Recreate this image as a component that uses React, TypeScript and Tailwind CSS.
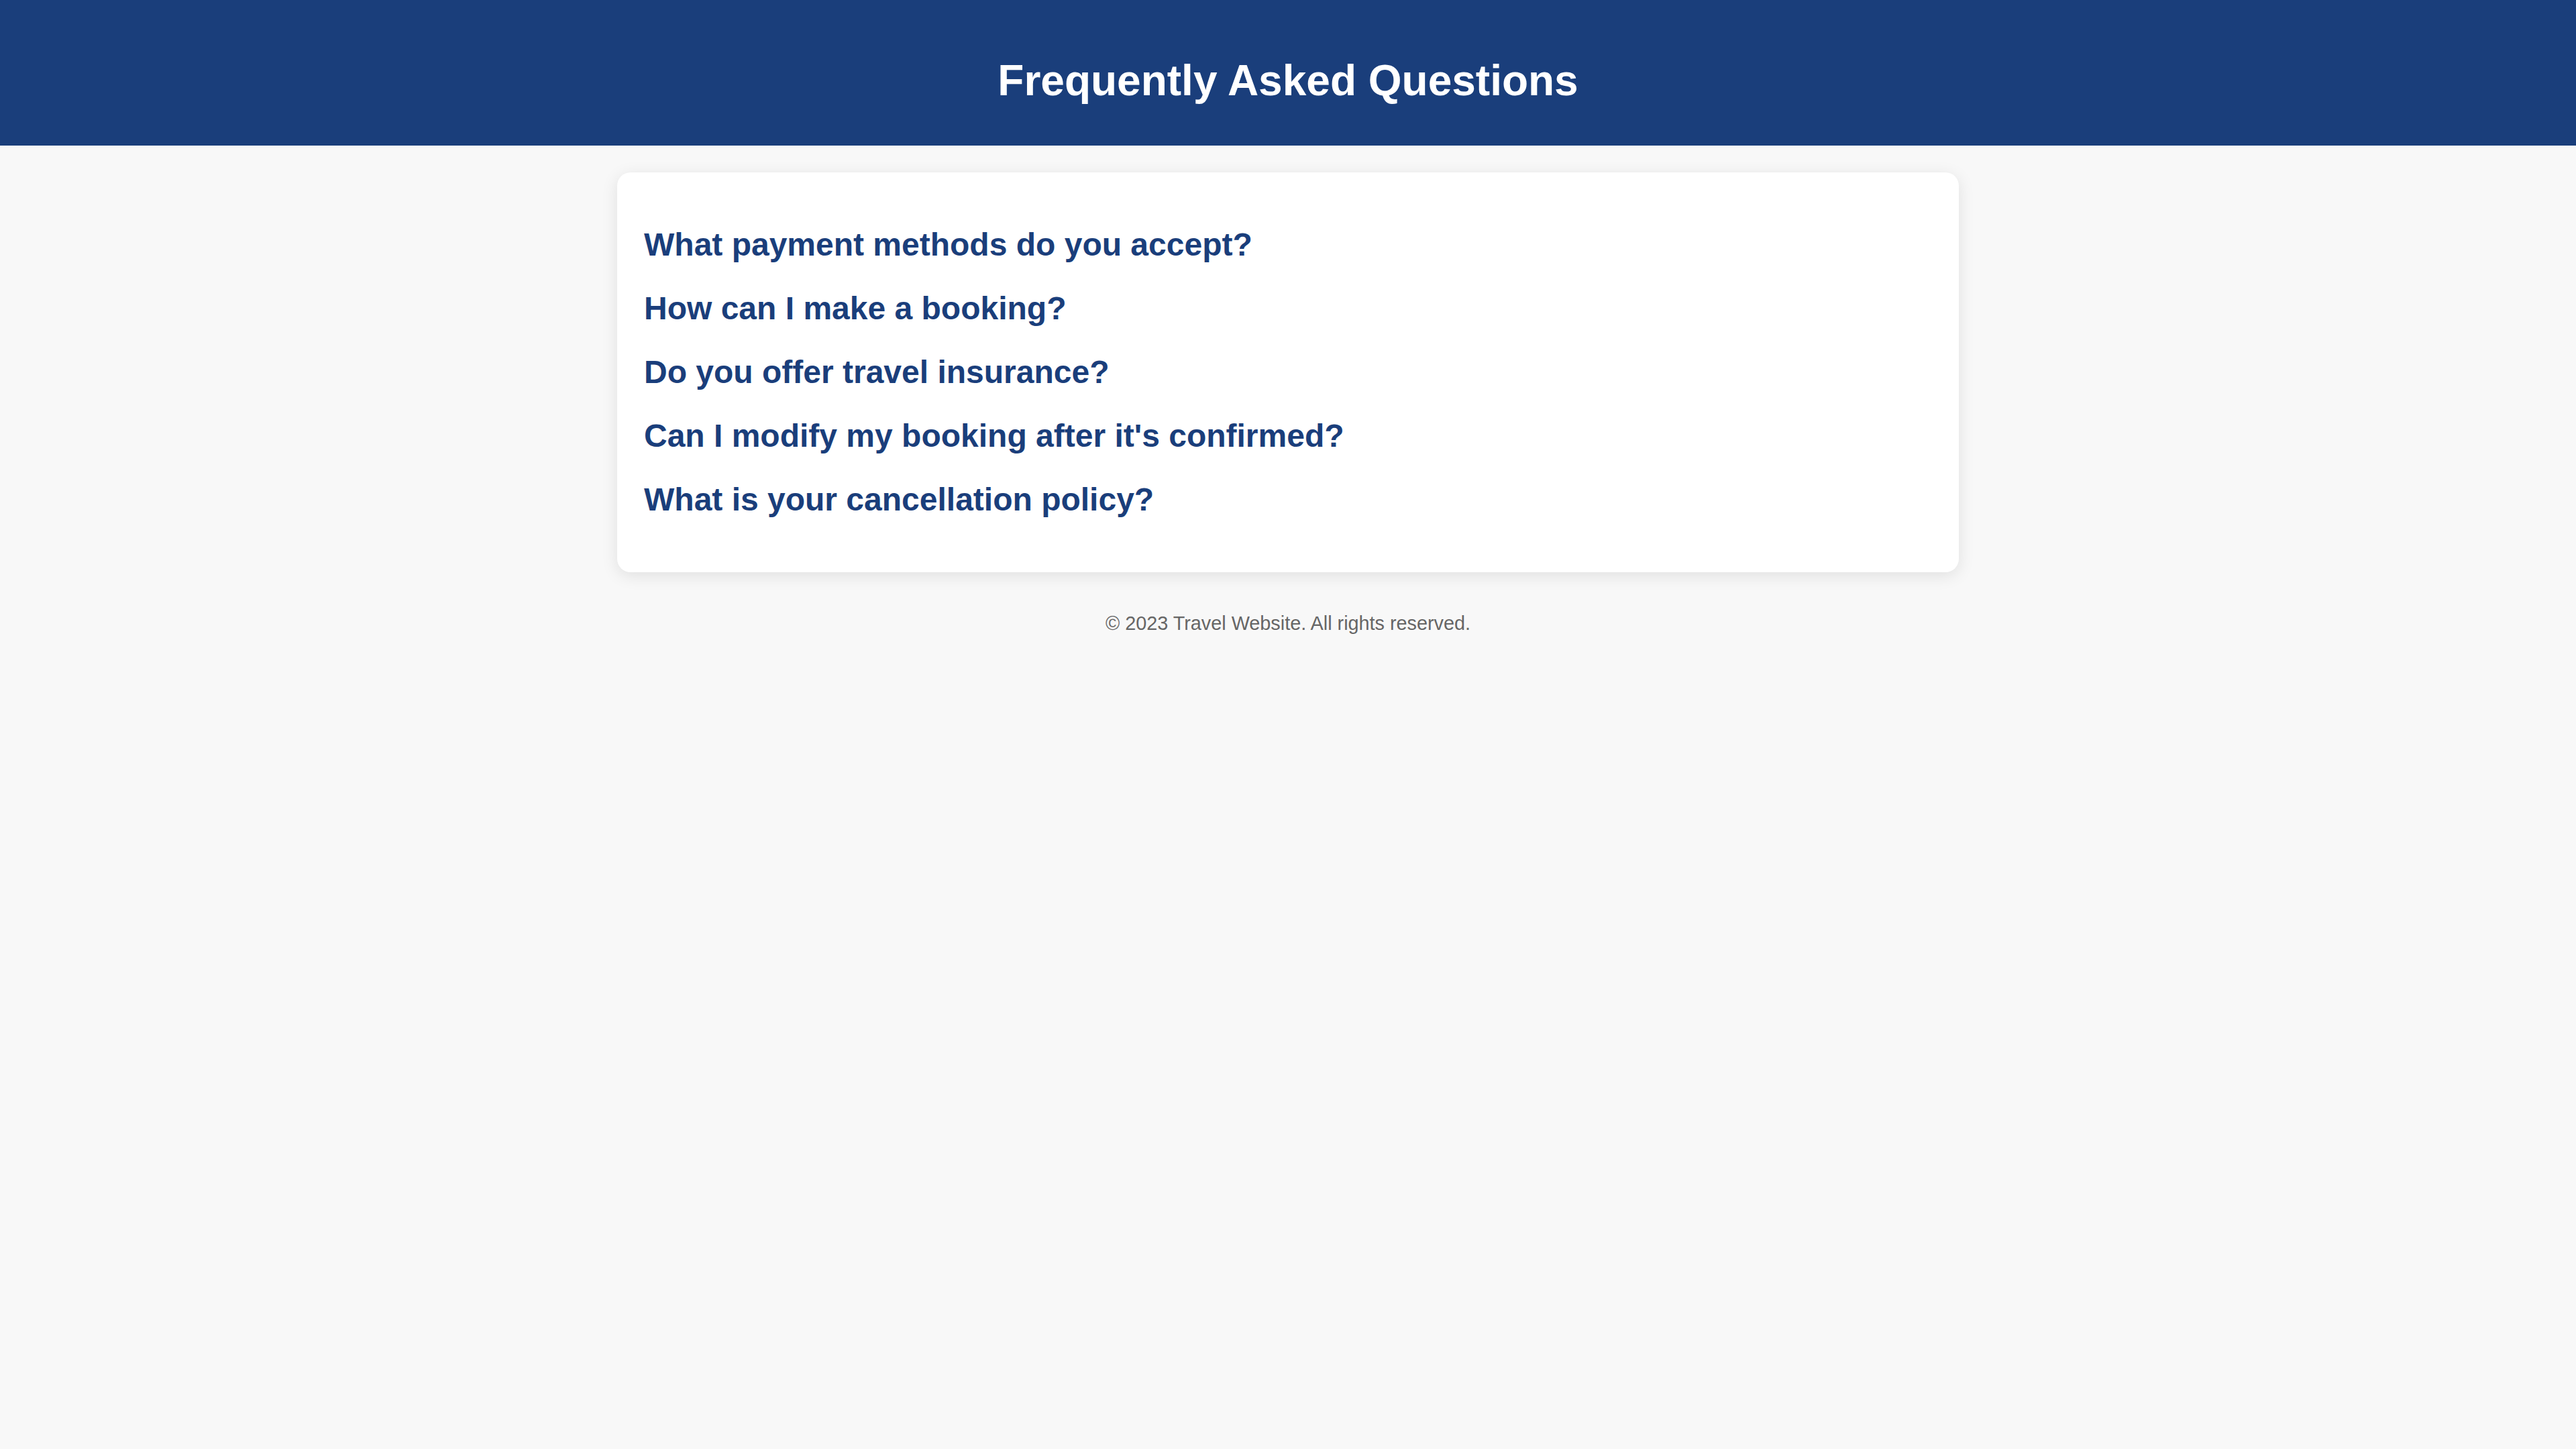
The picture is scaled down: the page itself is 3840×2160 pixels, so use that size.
import React from "react";

const questions = [
  "What payment methods do you accept?",
  "How can I make a booking?",
  "Do you offer travel insurance?",
  "Can I modify my booking after it's confirmed?",
  "What is your cancellation policy?",
];

export default function App() {
  return (
    <div
      className="min-h-screen bg-[#f8f8f8]"
      style={{ fontFamily: '"Liberation Sans", Arial, sans-serif' }}
    >
      <header className="bg-[#1a3e7b] pt-[84px] pb-[59px] text-center">
        <h1 className="text-[64px] leading-[73.6px] font-bold text-white">
          Frequently Asked Questions
        </h1>
      </header>
      <main className="mx-auto mt-[40px] w-[2000px]">
        <div className="flex flex-col gap-[40px] rounded-[20px] bg-white px-[40px] pt-[80px] pb-[80px] shadow-[0_5px_25px_rgba(0,0,0,0.1)]">
          {questions.map((q) => (
            <h3
              key={q}
              className="text-[48px] leading-[55.2px] font-bold text-[#1a3e7b]"
            >
              {q}
            </h3>
          ))}
        </div>
      </main>
      <footer className="mt-[60px] text-center text-[28.8px] leading-[33px] text-[#666666]">
        © 2023 Travel Website. All rights reserved.
      </footer>
    </div>
  );
}
